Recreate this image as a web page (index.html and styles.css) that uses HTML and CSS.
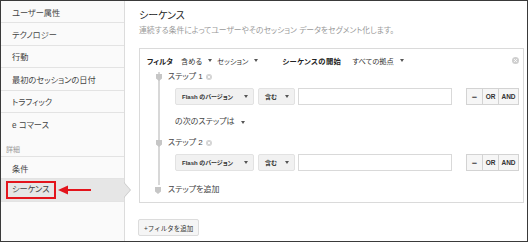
FILE: index.html
```html
<!DOCTYPE html>
<html lang="ja">
<head>
  <meta charset="UTF-8">
  <title>セグメント - シーケンス</title>
  <link rel="stylesheet" href="styles.css">
</head>
<body>
  <div class="frame">
    <nav class="sidebar">
      <div class="nav-item">ユーザー属性</div>
      <div class="nav-item">テクノロジー</div>
      <div class="nav-item">行動</div>
      <div class="nav-item">最初のセッションの日付</div>
      <div class="nav-item">トラフィック</div>
      <div class="nav-item last">e コマース</div>
      <div class="nav-label">詳細</div>
      <div class="nav-item">条件</div>
      <div class="nav-item selected">
        <span class="callout">シーケンス</span>
        <svg class="red-arrow" width="34" height="10" viewBox="0 0 34 10">
          <polygon points="0,5 10,0.5 10,9.5" fill="#e3141c"/>
          <rect x="9" y="4" width="24" height="2" fill="#e3141c"/>
        </svg>
      </div>
    </nav>

    <main class="main">
      <h1 class="title">シーケンス</h1>
      <p class="subtitle">連続する条件によってユーザーやそのセッション データをセグメント化します。</p>

      <div class="filter-box">
        <div class="filter-head">
          <b>フィルタ</b>
          <span class="pick include">含める<i class="caret"></i></span>
          <span class="pick">セッション<i class="caret"></i></span>
          <b class="seq-start">シーケンスの開始</b>
          <span class="pick">すべての拠点<i class="caret"></i></span>
          <svg class="close" width="7" height="7" viewBox="0 0 8 8">
            <circle cx="4" cy="4" r="4" fill="#cfcfcf"/>
            <path d="M2.5 2.5L5.5 5.5M5.5 2.5L2.5 5.5" stroke="#fff" stroke-width="1.1"/>
          </svg>
        </div>

        <div class="steps">
          <div class="step-label">
            <svg class="marker" width="6" height="7" viewBox="0 0 6 7"><path d="M0 0H6V4.5L3 7L0 4.5Z" fill="#c6c6c6"/></svg>
            ステップ 1
            <svg class="remove" width="6" height="6" viewBox="0 0 8 8">
              <circle cx="4" cy="4" r="4" fill="#d4d4d4"/>
              <path d="M2.5 2.5L5.5 5.5M5.5 2.5L2.5 5.5" stroke="#fff" stroke-width="1.2"/>
            </svg>
          </div>
          <div class="cond-row">
            <div class="dd wide">Flash のバージョン<i class="caret"></i></div>
            <div class="dd">含む<i class="caret"></i></div>
            <div class="value"></div>
            <div class="ops"><span class="minus">&minus;</span><span>OR</span><span>AND</span></div>
          </div>

          <div class="next-label">の次のステップは<i class="caret"></i></div>

          <div class="step-label">
            <svg class="marker" width="6" height="7" viewBox="0 0 6 7"><path d="M0 0H6V4.5L3 7L0 4.5Z" fill="#c6c6c6"/></svg>
            ステップ 2
            <svg class="remove" width="6" height="6" viewBox="0 0 8 8">
              <circle cx="4" cy="4" r="4" fill="#d4d4d4"/>
              <path d="M2.5 2.5L5.5 5.5M5.5 2.5L2.5 5.5" stroke="#fff" stroke-width="1.2"/>
            </svg>
          </div>
          <div class="cond-row">
            <div class="dd wide">Flash のバージョン<i class="caret"></i></div>
            <div class="dd">含む<i class="caret"></i></div>
            <div class="value"></div>
            <div class="ops"><span class="minus">&minus;</span><span>OR</span><span>AND</span></div>
          </div>
        </div>

        <div class="step-label add-step">
          <svg class="marker" width="6" height="7" viewBox="0 0 6 7"><path d="M0 0H6V4.5L3 7L0 4.5Z" fill="#c6c6c6"/></svg>
          ステップを追加
        </div>
      </div>

      <button class="add-filter">+フィルタを追加</button>
    </main>
  </div>
</body>
</html>
```

FILE: styles.css
```css
body {
  margin: 0;
  background: white;
  font-family: "Liberation Sans", "Noto Sans CJK JP", sans-serif;
  font-feature-settings: "palt" 1;
  color: #333;
}
.frame {
  width: 528px;
  height: 242px;
  box-sizing: border-box;
  border: 1px solid #3a3a3a;
  display: flex;
}

/* left menu */
.sidebar {
  width: 124px;
  flex: none;
  box-sizing: border-box;
  background: #fafafa;
  border-right: 1px solid #dcdcdc;
}
.nav-item {
  height: 21.4px;
  display: flex;
  align-items: center;
  padding-left: 11px;
  border-bottom: 1px solid #e3e3e3;
  font-size: 8.2px;
  color: #444;
}
.nav-item.last {
  border-bottom: none;
}
.nav-label {
  height: 10.6px;
  padding: 11px 0 0 5px;
  line-height: 10px;
  font-size: 7px;
  color: #999;
  border-bottom: 1px solid #e3e3e3;
}
.nav-item.selected {
  position: relative;
  background: #e6e6e6;
}
.nav-item.selected::before,
.nav-item.selected::after {
  content: "";
  position: absolute;
  top: 50%;
  width: 0;
  height: 0;
}
.nav-item.selected::before {
  right: -7px;
  margin-top: -8px;
  border-left: 7px solid #c9c9c9;
  border-top: 8px solid transparent;
  border-bottom: 8px solid transparent;
}
.nav-item.selected::after {
  right: -6px;
  margin-top: -7px;
  border-left: 6px solid #e6e6e6;
  border-top: 7px solid transparent;
  border-bottom: 7px solid transparent;
}
.callout {
  margin-left: -6px;
  padding: 0 4px;
  line-height: 14px;
  border: 2px solid #e3141c;
}
.red-arrow {
  position: absolute;
  left: 57px;
  top: 6px;
}

/* main panel */
.main {
  flex: 1;
  padding: 9px 3px 0 14px;
}
.title {
  margin: 0;
  font-size: 10px;
  line-height: 12px;
  font-weight: normal;
  color: #222;
}
.subtitle {
  margin: 4px 0 0;
  font-size: 7.8px;
  line-height: 10px;
  color: #9a9a9a;
}
.filter-box {
  margin-top: 12px;
  height: 155px;
  box-sizing: border-box;
  border: 1px solid #dadada;
}
.filter-head {
  height: 23px;
  display: flex;
  align-items: center;
  padding: 0 4px 0 7px;
  font-size: 7.3px;
  color: #333;
  white-space: nowrap;
}
.filter-head b {
  color: #222;
}
.pick {
  margin-left: 5px;
  display: flex;
  align-items: center;
}
.filter-head .include {
  margin-left: 8px;
}
.filter-head .seq-start {
  margin-left: 24px;
  letter-spacing: 0.4px;
}
.filter-head .seq-start + .pick {
  margin-left: 11px;
}
.close {
  margin-left: auto;
}
.caret {
  display: inline-block;
  margin-left: 6px;
  border-left: 2px solid transparent;
  border-right: 2px solid transparent;
  border-top: 3px solid #555;
}

.steps {
  margin-left: 18px;
  padding-bottom: 14px;
  border-left: 2px solid #d8d8d8;
}
.step-label {
  position: relative;
  padding-left: 8px;
  line-height: 10px;
  font-size: 8px;
  color: #444;
}
.add-step {
  margin-left: 20px;
}
.marker {
  position: absolute;
  left: -4px;
  top: 2px;
}
.add-step .marker {
  left: -5px;
}
.remove {
  margin-left: 1px;
  vertical-align: -0.5px;
}
.next-label {
  margin: 12px 0 0 15px;
  line-height: 10px;
  font-size: 8px;
  color: #444;
  display: flex;
  align-items: center;
}
.cond-row {
  margin: 6px 0 0 15px;
  height: 17px;
  display: flex;
  align-items: center;
}
.cond-row + .step-label,
.next-label + .step-label {
  margin-top: 11px;
}
.dd {
  height: 17px;
  width: 37px;
  box-sizing: border-box;
  padding: 0 5px 0 6px;
  display: flex;
  align-items: center;
  justify-content: space-between;
  background: #f1f1f1;
  border: 1px solid #e2e2e2;
  border-radius: 2px;
  font-size: 6px;
  font-weight: bold;
  color: #333;
  white-space: nowrap;
  margin-right: 4px;
}
.dd.wide {
  width: 79px;
}
.value {
  width: 154px;
  height: 17px;
  box-sizing: border-box;
  margin-left: -1px;
  border: 1px solid #d9d9d9;
  background: white;
}
.ops {
  margin-left: 14px;
  display: flex;
  height: 15px;
  border: 1px solid #d3d3d3;
  background: #f6f6f6;
  font-size: 6.5px;
  font-weight: bold;
  color: #333;
}
.ops span {
  display: flex;
  align-items: center;
  justify-content: center;
  width: 15px;
  border-left: 1px solid #d3d3d3;
}
.ops span:first-child {
  border-left: none;
}
.ops span:last-child {
  width: 19px;
}
.ops .minus {
  font-size: 9px;
}
.add-filter {
  margin: 16px 0 0 -1px;
  height: 17px;
  padding: 0 5px;
  background: #f5f5f5;
  border: 1px solid #dcdcdc;
  border-radius: 2px;
  font-family: inherit;
  font-size: 6.5px;
  color: #333;
  white-space: nowrap;
}
```
